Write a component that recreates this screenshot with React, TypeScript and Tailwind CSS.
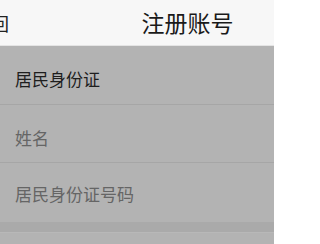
export default function App() {
  const font = { fontFamily: '"Noto Sans CJK SC", "Noto Sans", sans-serif' };
  return (
    <div
      className="w-[274px] h-[244px] overflow-hidden bg-[#b3b3b3] font-['Noto_Sans_CJK_SC','Noto_Sans',sans-serif]"
      style={font}
    >
      {/* Header — the screen is 375 wide, cropped */}
      <div className="relative w-[375px] h-[46px] bg-[#f7f7f7] border-b border-[#e4e4e4] flex items-center">
        <span className="ml-[-27px] text-[18px] leading-none text-[#222]">返回</span>
        <span className="absolute left-0 right-0 text-center text-[23px] leading-none text-[#1a1a1a]">
          注册账号
        </span>
      </div>

      {/* Form rows */}
      <div className="flex flex-col">
        <div className="h-[59px] flex items-center px-[15px] pt-[8px] border-b border-[#a6a6a6]">
          <span className="text-[17px] text-[#1e1e1e]">居民身份证</span>
        </div>
        <div className="h-[58px] flex items-center px-[15px] pt-[8px] border-b border-[#a6a6a6]">
          <span className="text-[17px] text-[#656565]">姓名</span>
        </div>
        <div className="h-[59px] flex items-center px-[15px] pt-[3px]">
          <span className="text-[17px] text-[#656565]">居民身份证号码</span>
        </div>
        <div className="h-[10px] bg-[#aaaaaa]" />
        <div className="h-[12px] bg-[#b3b3b3] border-t border-[#b8b8b8]" />
      </div>
    </div>
  );
}
